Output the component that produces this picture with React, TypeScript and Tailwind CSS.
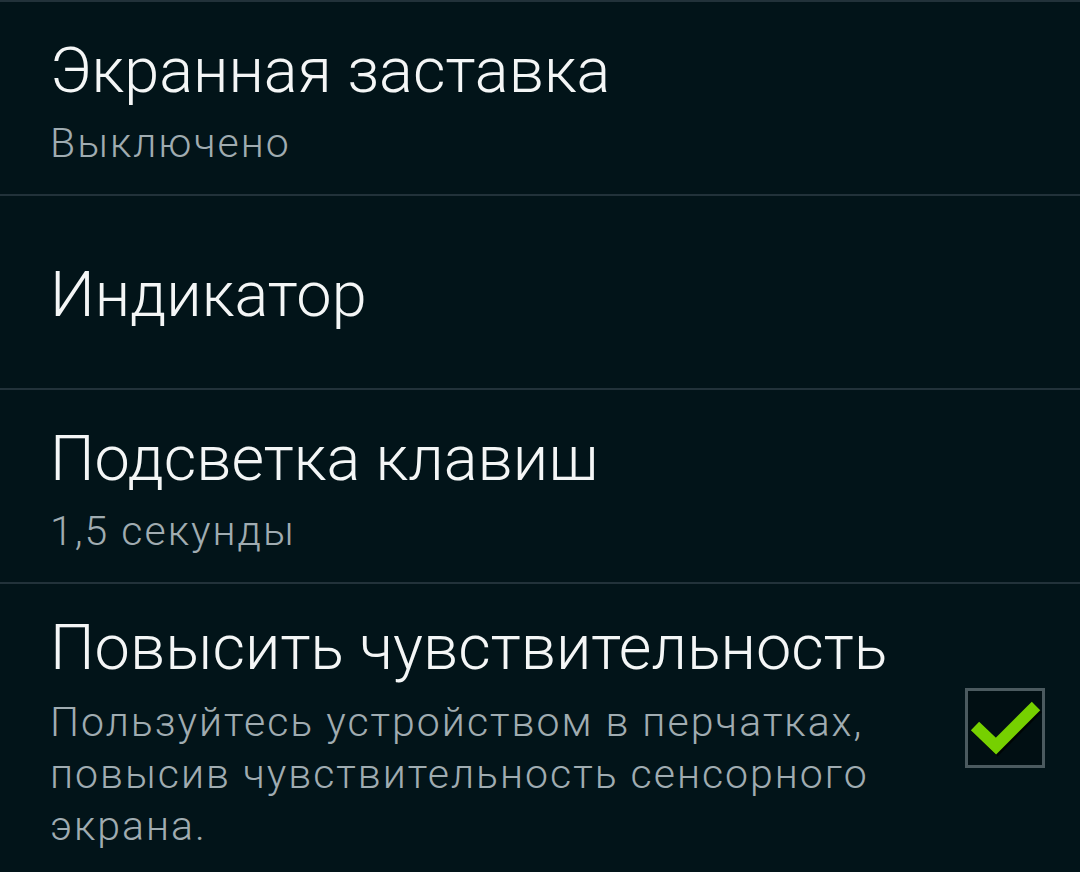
import React, { useState } from 'react'

type Item = {
  title: string
  summary?: string
  top: string
}

const items: Item[] = [
  { title: 'Экранная заставка', summary: 'Выключено', top: 'pt-[37px]' },
  { title: 'Индикатор', top: 'pt-[67px]' },
  { title: 'Подсветка клавиш', summary: '1,5 секунды', top: 'pt-[37px]' },
]

const CheckBox: React.FC<{ checked: boolean; onToggle: () => void }> = ({ checked, onToggle }) => (
  <button
    type="button"
    onClick={onToggle}
    className="relative h-[80px] w-[80px] shrink-0 border-[3px] border-[#4b5a5f] bg-[#010f13]">
    {checked && (
      <svg viewBox="0 0 80 80" className="absolute left-[-3px] top-[-3px] h-[80px] w-[80px]">
        {/* тень под галочкой */}
        <polyline
          points="10,38 31,58 71,18"
          fill="none"
          stroke="#000000"
          strokeOpacity="0.7"
          strokeWidth="12"
          transform="translate(1.5,2)"
        />
        <polyline points="10,38 31,58 71,18" fill="none" stroke="#76d000" strokeWidth="12" />
      </svg>
    )}
  </button>
)

const App: React.FC = () => {
  const [sensitive, setSensitive] = useState(true) // чувствительность экрана

  return (
    <div className="h-[872px] w-full overflow-hidden bg-[#021419] font-['Roboto','Noto_Sans',sans-serif] font-light">
      {items.map((item) => (
        <div key={item.title} className={`h-[194px] border-t-2 border-[#22323a] px-[50px] ${item.top}`}>
          <p className="text-[63px] leading-[64px] text-[#f4f6f6]">{item.title}</p>
          {item.summary && (
            <p className="mt-[14px] text-[41px] leading-[52px] tracking-[2px] text-[#a0acb1]">{item.summary}</p>
          )}
        </div>
      ))}

      <div className="flex h-[290px] flex-row items-center border-t-2 border-[#22323a] pl-[50px] pr-[35px]">
        <div className="flex h-full flex-1 flex-col pt-[32px]">
          <p className="text-[63px] leading-[64px] text-[#f4f6f6]">Повысить чувствительность</p>
          <p className="mt-[16px] text-[41px] leading-[52px] tracking-[2px] text-[#a0acb1]">
            Пользуйтесь устройством в перчатках, повысив чувствительность сенсорного экрана.
          </p>
        </div>
        <CheckBox checked={sensitive} onToggle={() => setSensitive(!sensitive)} />
      </div>
    </div>
  )
}

export default App
